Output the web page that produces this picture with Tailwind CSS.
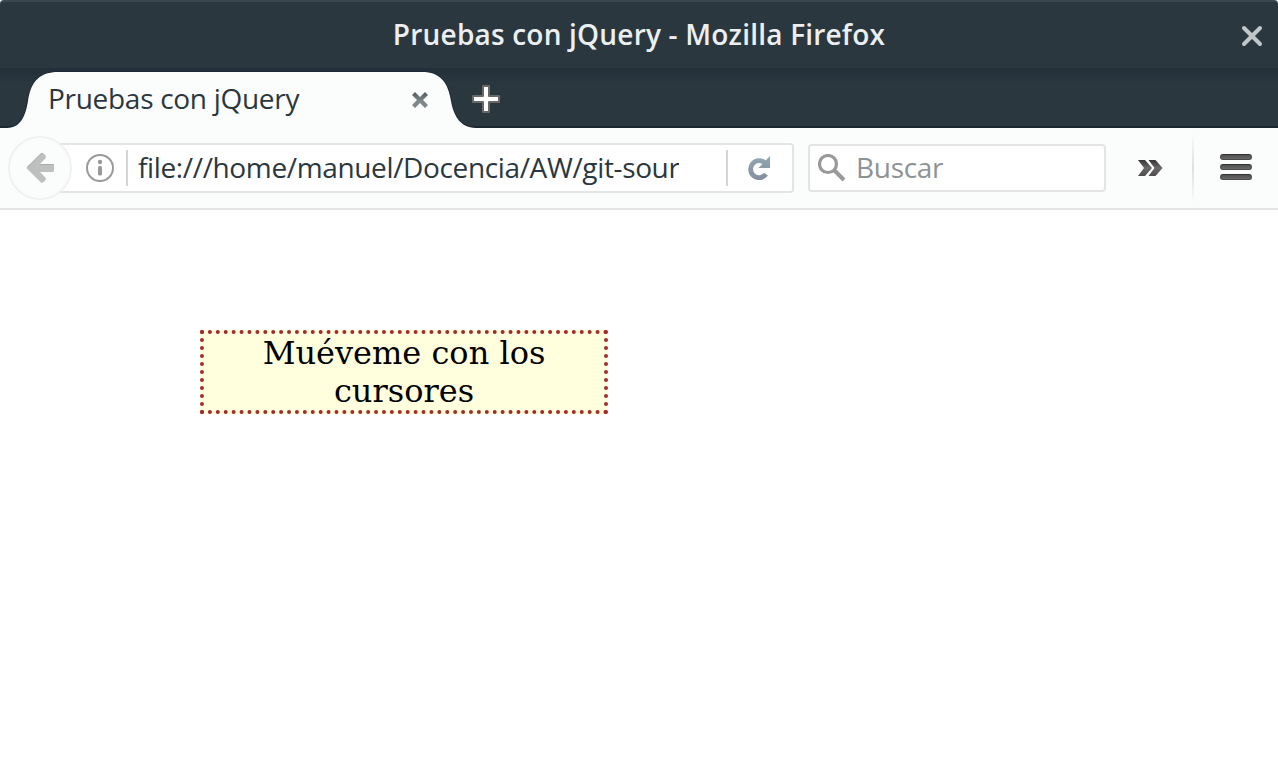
<!DOCTYPE html>
<html lang="es">
<head>
<meta charset="utf-8">
<title>Pruebas con jQuery</title>
<script src="https://cdn.jsdelivr.net/npm/@tailwindcss/browser@4"></script>
</head>
<body class="bg-white h-[784px] w-[1278px] overflow-hidden font-['Open_Sans','Noto_Sans',sans-serif] text-[28px] text-[#2b373e]">
<header class="relative flex h-[68px] items-center justify-center rounded-t-[4px] border-t-2 border-[#3b474f] bg-[#2b373f] text-[#eceff1]">
  <h1 class="text-[28px] leading-[38px] font-semibold whitespace-nowrap tracking-[0.2px] pb-[2px]">Pruebas con jQuery - Mozilla Firefox</h1>
  <svg class="absolute right-[15px] top-[23px]" width="22" height="22" viewBox="0 0 22 22" stroke="#c1c6c9" stroke-width="4" stroke-linecap="round"><path d="M3 3 19 19M19 3 3 19"/></svg>
</header>
<nav class="relative h-[60px] bg-linear-to-b from-[#222e38] from-0% via-[#2b373f] via-25% to-[#2b373f] border-b-2 border-[#1d272f]">
  <svg class="absolute left-0 top-0" width="500" height="60" viewBox="0 0 500 60"><path d="M0 60H7C22 60 26 45 28 33C31 12 41 4 58 4H422C440 4 448 14 451 33C453 45 459 60 476 60Z" fill="#fbfdfc" stroke="#1d2a36" stroke-width="2" paint-order="stroke"/></svg>
  <div class="relative flex h-full items-center">
    <span class="ml-[48px] w-[364px] leading-[38px] whitespace-nowrap pt-[2px] tracking-[-0.29px]">Pruebas con jQuery</span>
    <svg class="mt-[6px]" width="16" height="16" viewBox="0 0 16 16"><defs><linearGradient id="g" x2="0" y2="1"><stop stop-color="#505a5e"/><stop offset=".55" stop-color="#7e878a"/></linearGradient></defs><path d="M3 0 8 5 13 0 16 3 11 8 16 13 13 16 8 11 3 16 0 13 5 8 0 3Z" fill="url(#g)"/></svg>
    <svg class="ml-[44px] mt-[4px]" width="28" height="28" viewBox="0 0 28 28"><path d="M11 1h6v10h10v6H17v10h-6V17H1v-6h10Z" fill="#fff" stroke="#686869" stroke-width="2" stroke-linejoin="round"/></svg>
  </div>
</nav>
<div class="flex h-[82px] border-b-2 border-[#e3e5e4] bg-[#fbfdfc]">
  <div class="relative z-10 ml-[8px] mt-[8px] flex size-[64px] shrink-0 items-center justify-center rounded-full border-2 border-[#f0f2f1] bg-[#fbfdfc]">
    <svg width="28" height="32" viewBox="0 0 28 32"><path d="M17 1.500 19.500 4Q20.500 5.200 19.500 6.200L14 12H26.500Q28 12 28 13.500V18.500Q28 20 26.500 20H14L19.500 25.800Q20.500 27 19.500 28L17 30.500Q16 31.300 15 30.500L1 16.700Q.5 16 1 15.300L15 1.500Q16 .7 17 1.500Z" fill="#bec0bf"/><path d="M1 15.500 15 1.700Q16 .9 17 1.700L19.500 4.200M14 12.500H27.500" stroke="#aaacab" fill="none"/></svg>
  </div>
  <div class="-ml-[14px] mt-[15px] flex h-[50px] w-[736px] items-center rounded-r-[4px] border-2 border-l-0 border-[#e3e5e4] bg-white">
    <svg class="ml-[27px] shrink-0" width="30" height="30" viewBox="0 0 30 30" fill="#999"><circle cx="15" cy="15" r="13" fill="none" stroke="#999" stroke-width="2"/><circle cx="15" cy="9" r="2.200"/><rect x="13" y="13" width="4" height="9.500" rx="1.500"/></svg>
    <div class="ml-[11px] h-[36px] w-[2px] bg-[#d3d4d4]"></div>
    <div class="ml-[10px] w-[541px] overflow-hidden whitespace-nowrap leading-[38px] pb-[2px] tracking-[-0.36px]">file:///home/manuel/Docencia/AW/git-sour</div>
    <div class="ml-[47px] h-[36px] w-[2px] bg-[#d3d4d4]"></div>
    <svg class="ml-[20px] shrink-0" width="23" height="24" viewBox="0 0 23 24"><defs><linearGradient id="r" gradientUnits="userSpaceOnUse" x1="0" y1="0" x2="0" y2="24"><stop stop-color="#91a7b5"/><stop offset="1" stop-color="#858d9e"/></linearGradient></defs><path d="M22 0V12H10.500Z" fill="url(#r)"/><path d="M17 7A8.500 8.500 0 1 0 18 18.200" fill="none" stroke="url(#r)" stroke-width="4.800"/></svg>
  </div>
  <div class="ml-[14px] mt-[16px] flex h-[48px] w-[298px] items-center rounded-[4px] border-2 border-[#e3e5e4] bg-white text-[#8d9295]">
    <svg class="ml-[8px] shrink-0" width="28" height="28" viewBox="0 0 28 28" fill="none" stroke="#999"><circle cx="10" cy="10" r="8.500" stroke-width="3.200"/><path d="M16 16 26 26" stroke-width="4"/></svg>
    <span class="ml-[10px] leading-[38px] pb-[2px] tracking-[-0.3px]">Buscar</span>
  </div>
  <svg class="ml-[32px] mt-[32px]" width="25" height="16" viewBox="0 0 25 16"><defs><linearGradient id="c" x2="0" y2="1"><stop stop-color="#343434"/><stop offset=".5" stop-color="#6b676a"/><stop offset="1" stop-color="#4d4b4d"/></linearGradient></defs><path d="M0 0H7L14 8 7 16H0L6 8ZM10.500 0H17.500L24.500 8 17.500 16H10.500L16.500 8Z" fill="url(#c)"/></svg>
  <div class="ml-[29px] mt-[4px] h-[72px] w-[2px] bg-linear-to-b from-transparent via-[#dfe1e0] to-transparent"></div>
  <div class="ml-[26px] mt-[26px] flex w-[32px] flex-col gap-[4px]">
    <div class="h-[6px] rounded-[3px] border border-[#4a494a] border-t-[#333] bg-linear-to-b from-[#505050] to-[#6b696b]"></div>
    <div class="h-[6px] rounded-[3px] border border-[#4a494a] border-t-[#333] bg-linear-to-b from-[#505050] to-[#6b696b]"></div>
    <div class="h-[6px] rounded-[3px] border border-[#4a494a] border-t-[#333] bg-linear-to-b from-[#505050] to-[#6b696b]"></div>
  </div>
</div>
<main class="pl-[200px] pt-[120px]">
  <div class="h-[84px] w-[408px] border-4 border-dotted border-[#a52a2a] bg-[#ffffdd] text-center font-['DejaVu_Serif',serif] text-[32px] leading-[38px] text-black">Muéveme con los cursores</div>
</main>
</body>
</html>
